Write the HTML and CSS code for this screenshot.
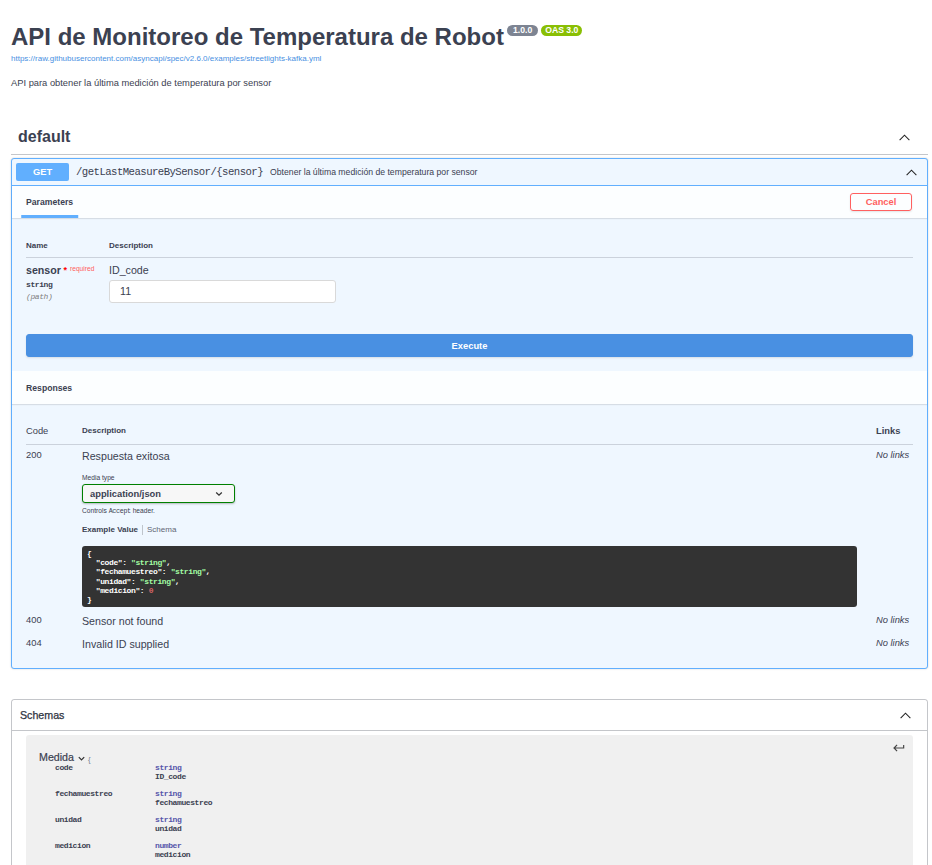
FILE: index.html
```html
<!DOCTYPE html>
<html lang="es">
<head>
<meta charset="utf-8">
<title>Swagger UI</title>
<link rel="stylesheet" href="styles.css">
</head>
<body>
<div class="wrapper">
  <div class="info">
    <div class="title-row">
      <h2 class="title">API de Monitoreo de Temperatura de Robot</h2>
      <span class="badge ver">1.0.0</span>
      <span class="badge oas">OAS 3.0</span>
    </div>
    <a class="spec-url" href="#">https://raw.githubusercontent.com/asyncapi/spec/v2.6.0/examples/streetlights-kafka.yml</a>
    <p class="desc">API para obtener la última medición de temperatura por sensor</p>
  </div>

  <section class="tag-section">
    <h3 class="tag-head">
      <span class="tag-name">default</span>
      <svg class="chev" width="13" height="13" viewBox="0 0 20 20"><path d="M2.5 14 L10 6.5 L17.5 14" fill="none" stroke="#222" stroke-width="1.6"/></svg>
    </h3>

    <div class="opblock">
      <div class="op-summary">
        <span class="method">GET</span>
        <span class="path">/getLastMeasureBySensor/{sensor}</span>
        <span class="op-desc">Obtener la última medición de temperatura por sensor</span>
        <svg class="chev op-chev" width="13" height="13" viewBox="0 0 20 20"><path d="M2.5 14 L10 6.5 L17.5 14" fill="none" stroke="#222" stroke-width="1.6"/></svg>
      </div>

      <div class="op-body">
        <div class="sec-head">
          <div class="tab"><span class="tab-label">Parameters</span></div>
          <button class="cancel">Cancel</button>
        </div>

        <div class="params">
          <div class="param-grid">
            <div class="th">Name</div>
            <div class="th">Description</div>
            <div class="pname">
              <div class="pname-main">sensor<span class="star">&nbsp;*</span><span class="req">required</span></div>
              <div class="ptype">string</div>
              <div class="pin">(path)</div>
            </div>
            <div class="pdesc">
              <div class="pdesc-text">ID_code</div>
              <div class="pinput">11</div>
            </div>
          </div>
        </div>

        <div class="execute-wrap">
          <button class="execute">Execute</button>
        </div>

        <div class="sec-head resp-head">
          <h4 class="resp-title">Responses</h4>
        </div>

        <div class="responses">
          <div class="resp-grid">
            <div class="rh code-h">Code</div>
            <div class="rh desc-h">Description</div>
            <div class="rh links-h">Links</div>

            <div class="rc rcode rc-tight">200</div>
            <div class="rc rdesc rc-tight">
              <div class="rtext">Respuesta exitosa</div>
              <div class="media-label">Media type</div>
              <div class="select"><span>application/json</span>
                <svg width="8" height="6" viewBox="0 0 8 6"><path d="M1.2 1.5 L4 4.2 L6.8 1.5" fill="none" stroke="#333" stroke-width="1.3"/></svg>
              </div>
              <div class="media-note">Controls <code>Accept</code> header.</div>
              <div class="ex-tabs"><span class="ex-active">Example Value</span><span class="ex-sep"></span><span class="ex-other">Schema</span></div>
<pre class="example"><span class="p">{</span>
  <span class="k">"code"</span><span class="p">:</span> <span class="s">"string"</span><span class="p">,</span>
  <span class="k">"fechamuestreo"</span><span class="p">:</span> <span class="s">"string"</span><span class="p">,</span>
  <span class="k">"unidad"</span><span class="p">:</span> <span class="s">"string"</span><span class="p">,</span>
  <span class="k">"medicion"</span><span class="p">:</span> <span class="n">0</span>
<span class="p">}</span></pre>
            </div>
            <div class="rc rlinks rc-tight">No links</div>

            <div class="rc rcode">400</div>
            <div class="rc rdesc"><div class="rtext">Sensor not found</div></div>
            <div class="rc rlinks">No links</div>

            <div class="rc rcode">404</div>
            <div class="rc rdesc"><div class="rtext">Invalid ID supplied</div></div>
            <div class="rc rlinks">No links</div>
          </div>
        </div>
      </div>
    </div>
  </section>

  <section class="models">
    <h4 class="models-head">
      <span>Schemas</span>
      <svg class="chev" width="13" height="13" viewBox="0 0 20 20"><path d="M2.5 14 L10 6.5 L17.5 14" fill="none" stroke="#222" stroke-width="1.6"/></svg>
    </h4>
    <div class="model-container">
      <div class="model-box">
        <div class="model-title-row">
          <span class="model-title">Medida</span>
          <svg class="model-toggle" width="9" height="9" viewBox="0 0 10 10"><path d="M2 3.5 L5 6.5 L8 3.5" fill="none" stroke="#333" stroke-width="1.4"/></svg>
          <span class="brace">{</span>
        </div>
        <div class="props">
          <div class="prop"><div class="prop-name">code</div><div class="prop-val"><div class="prop-type">string</div><div class="prop-fmt">ID_code</div></div></div>
          <div class="prop"><div class="prop-name">fechamuestreo</div><div class="prop-val"><div class="prop-type">string</div><div class="prop-fmt">fechamuestreo</div></div></div>
          <div class="prop"><div class="prop-name">unidad</div><div class="prop-val"><div class="prop-type">string</div><div class="prop-fmt">unidad</div></div></div>
          <div class="prop"><div class="prop-name">medicion</div><div class="prop-val"><div class="prop-type">number</div><div class="prop-fmt">medicion</div></div></div>
        </div>
        <svg class="jump" width="14" height="14" viewBox="0 0 24 24"><path d="M19 7v4H5.83l3.58-3.59L8 6l-6 6 6 6 1.41-1.41L5.83 13H21V7z" fill="#444"/></svg>
      </div>
    </div>
  </section>
</div>
</body>
</html>
```

FILE: styles.css
```css
* { box-sizing: border-box; }
html, body { margin: 0; padding: 0; background: #fff; }
body {
  font-family: "Liberation Sans", Arial, sans-serif;
  color: #3b4151;
  font-size: 9.33px;
}
.wrapper { padding: 23px 4px 0 11px; }

/* info */
.title-row { display: flex; align-items: flex-start; }
.title {
  margin: 0;
  font-size: 24px;
  line-height: 28px;
  font-weight: 700;
  color: #3b4151;
}
.badge {
  margin-top: 2px;
  margin-left: 3px;
  height: 11px;
  padding: 0 4px;
  border-radius: 20px;
  color: #fff;
  font-size: 8.67px;
  font-weight: 700;
  line-height: 11px;
}
.badge.ver { background: #7d8492; padding: 0 6px; }
.badge.oas { background: #89bf04; }
.spec-url {
  display: block;
  margin-top: 3px;
  font-size: 8px;
  line-height: 10px;
  color: #4990e2;
  text-decoration: none;
}
.desc { margin: 13px 0 0; font-size: 9.33px; line-height: 12px; }

/* tag */
.tag-section { margin-top: 31px; }
.tag-head {
  margin: 0 0 3px;
  display: flex;
  align-items: center;
  justify-content: space-between;
  padding: 7px 17px 7px 7px;
  border-bottom: 1px solid rgba(59, 65, 81, .3);
  font-size: 16px;
  line-height: 20px;
  font-weight: 700;
  color: #3b4151;
}
.chev { display: block; }

/* opblock */
.opblock {
  border: 1px solid #61affe;
  border-radius: 3px;
  background: #eff7ff;
  box-shadow: 0 0 2px rgba(0, 0, 0, .19);
}
.op-summary {
  display: flex;
  align-items: center;
  padding: 4px 9px 4px 4px;
  border-bottom: 1px solid #61affe;
}
.method {
  width: 53px;
  height: 18px;
  border-radius: 2px;
  background: #61affe;
  color: #fff;
  font-weight: 700;
  font-size: 9.33px;
  line-height: 18px;
  text-align: center;
}
.path {
  margin-left: 7px;
  font-family: "Liberation Mono", "DejaVu Sans Mono", monospace;
  font-size: 10.67px;
  letter-spacing: -0.55px;
  color: #3b4151;
}
.op-desc {
  flex: 1;
  margin-left: 7px;
  font-size: 8.67px;
  color: #3b4151;
}

.sec-head {
  display: flex;
  align-items: center;
  justify-content: space-between;
  min-height: 32px;
  padding: 0 15px 0 14px;
  background: rgba(255, 255, 255, .8);
  box-shadow: 0 1px 1px rgba(0, 0, 0, .1);
}
.tab { align-self: stretch; display: flex; align-items: center; }
.tab-label {
  position: relative;
  font-size: 8.67px;
  font-weight: 700;
}
.tab-label::after {
  content: "";
  position: absolute;
  left: 50%;
  bottom: -11px;
  width: 122%;
  height: 3px;
  transform: translateX(-50%);
  background: #61affe;
}
.cancel {
  width: 62px;
  height: 18px;
  border: 1px solid #ff6060;
  border-radius: 3px;
  background: transparent;
  color: #ff6060;
  font-family: "Liberation Sans", Arial, sans-serif;
  font-size: 9.33px;
  font-weight: 700;
  padding: 0;
  box-shadow: 0 1px 2px rgba(0,0,0,.1);
}

.params { padding: 14px 14px 18px; }
.param-grid { display: grid; grid-template-columns: 83px 1fr; }
.th {
  height: 26px;
  display: flex;
  align-items: center;
  font-size: 8px;
  font-weight: 700;
  border-bottom: 1px solid rgba(59, 65, 81, .2);
  padding-top: 1px;
}
.pname { padding-top: 6px; }
.pname-main { font-size: 10.67px; line-height: 13px; font-weight: 700; }
.star { color: red; font-size: 9px; position: relative; top: -1px; }
.req { color: #ff6060; font-size: 6.67px; font-weight: 400; vertical-align: top; margin-left: 3px; position: relative; top: -2px; }
.ptype {
  margin-top: 1px;
  font-family: "Liberation Mono", monospace;
  font-size: 8px;
  letter-spacing: -0.4px;
  font-weight: 700;
  line-height: 12px;
}
.pin {
  font-family: "Liberation Mono", monospace;
  font-size: 8px;
  letter-spacing: -0.4px;
  font-style: italic;
  color: gray;
  line-height: 12px;
}
.pdesc { padding-top: 6px; }
.pdesc-text { font-size: 10.67px; line-height: 12px; }
.pinput {
  margin-top: 4px;
  width: 227px;
  height: 23px;
  border: 1px solid #d9d9d9;
  border-radius: 3px;
  background: #fff;
  padding: 0 10px;
  font-size: 10.67px;
  line-height: 21px;
  color: #3b4151;
  font-weight: 400;
}

.execute-wrap { padding: 13px 14px 14px; }
.execute {
  display: block;
  width: 100%;
  height: 23px;
  border: 1px solid #4990e2;
  border-radius: 3px;
  background: #4990e2;
  color: #fff;
  font-family: "Liberation Sans", Arial, sans-serif;
  font-size: 9.33px;
  font-weight: 700;
  box-shadow: 0 1px 2px rgba(0,0,0,.1);
}

.resp-head { min-height: 33px; }
.resp-title { margin: 0; font-size: 8.67px; font-weight: 700; }

.responses { padding: 14px 14px 12px; }
.resp-grid { display: grid; grid-template-columns: 56px 1fr 37px; }
.rh {
  height: 27px;
  display: flex;
  align-items: center;
  border-bottom: 1px solid rgba(59, 65, 81, .2);
  padding-bottom: 1px;
}
.code-h { font-size: 9.33px; }
.desc-h { font-size: 8px; font-weight: 700; }
.links-h { font-size: 9.33px; font-weight: 700; }
.rc { padding: 5px 0 5px; }
.rc.rc-tight { padding-bottom: 3px; }
.rcode { font-size: 9.33px; line-height: 12px; padding-top: 4px; }
.rtext { font-size: 10.67px; line-height: 13px; }
.rlinks { font-size: 9.33px; font-style: italic; line-height: 12px; padding-top: 4px; white-space: nowrap; }
.media-label { margin-top: 11px; font-size: 6.67px; line-height: 8px; }
.select {
  margin-top: 2px;
  width: 153px;
  height: 19px;
  border: 1px solid #008000;
  border-radius: 3px;
  background: #f7f7f7;
  display: flex;
  align-items: center;
  justify-content: space-between;
  padding: 0 11px 0 7px;
  font-size: 9.33px;
  font-weight: 700;
  box-shadow: 0 1px 2px rgba(0,0,0,.25);
}
.media-note { margin-top: 4px; font-size: 6.67px; line-height: 8px; }
.media-note code { font-family: "Liberation Mono", monospace; font-size: 6.67px; letter-spacing: -0.3px; }
.ex-tabs { margin-top: 10px; display: flex; align-items: center; font-size: 8px; line-height: 10px; }
.ex-active { font-weight: 700; color: #3b4151; }
.ex-sep { width: 1px; height: 10px; background: rgba(0,0,0,.2); margin: 0 4px; }
.ex-other { color: #3b4151; opacity: .8; }
.example {
  margin: 11px 19px 0 0;
  background: #333;
  border-radius: 3px;
  padding: 3px 5px;
  font-family: "Liberation Mono", monospace;
  font-size: 8px;
  letter-spacing: -0.4px;
  line-height: 9.2px;
  font-weight: 700;
  color: #fff;
  white-space: pre;
}
.example .k { color: #fff; }
.example .p { color: #fff; }
.example .s { color: #a2fca2; }
.example .n { color: #d36363; }

/* models */
.models {
  margin-top: 30px;
  border: 1px solid rgba(59, 65, 81, .3);
  border-radius: 3px;
}
.models-head {
  margin: 0;
  display: flex;
  align-items: center;
  justify-content: space-between;
  height: 31px;
  padding: 0 15px 0 8px;
  border-bottom: 1px solid rgba(59, 65, 81, .3);
  font-size: 10.67px;
  font-weight: 400;
  color: #2f3442;
  -webkit-text-stroke: 0.25px #2f3442;
}
.model-container { padding: 4px 14px 10px; }
.model-box {
  position: relative;
  background: rgba(0, 0, 0, .06);
  border-radius: 3px;
  padding: 16px 13px 10px;
}
.model-title-row { display: flex; align-items: center; }
.model-title { font-size: 10.67px; line-height: 13px; color: #3b4151; -webkit-text-stroke: 0.2px #3b4151; }
.model-toggle { margin-left: 3px; margin-top: 2px; }
.brace { margin-left: 2px; font-size: 8px; color: #7d8492; margin-top: 3px; }
.props { margin-top: -1px; padding-left: 16px; }
.prop { display: flex; padding-bottom: 8px; }
.prop-name, .prop-type, .prop-fmt {
  font-family: "Liberation Mono", monospace;
  font-size: 8px;
  letter-spacing: -0.4px;
  line-height: 9px;
  font-weight: 700;
}
.prop-name { width: 100px; color: #3b4151; }
.prop-type { color: #55a; }
.prop-fmt { color: #3b4151; }
.jump { position: absolute; right: 7px; top: 6px; }
```
